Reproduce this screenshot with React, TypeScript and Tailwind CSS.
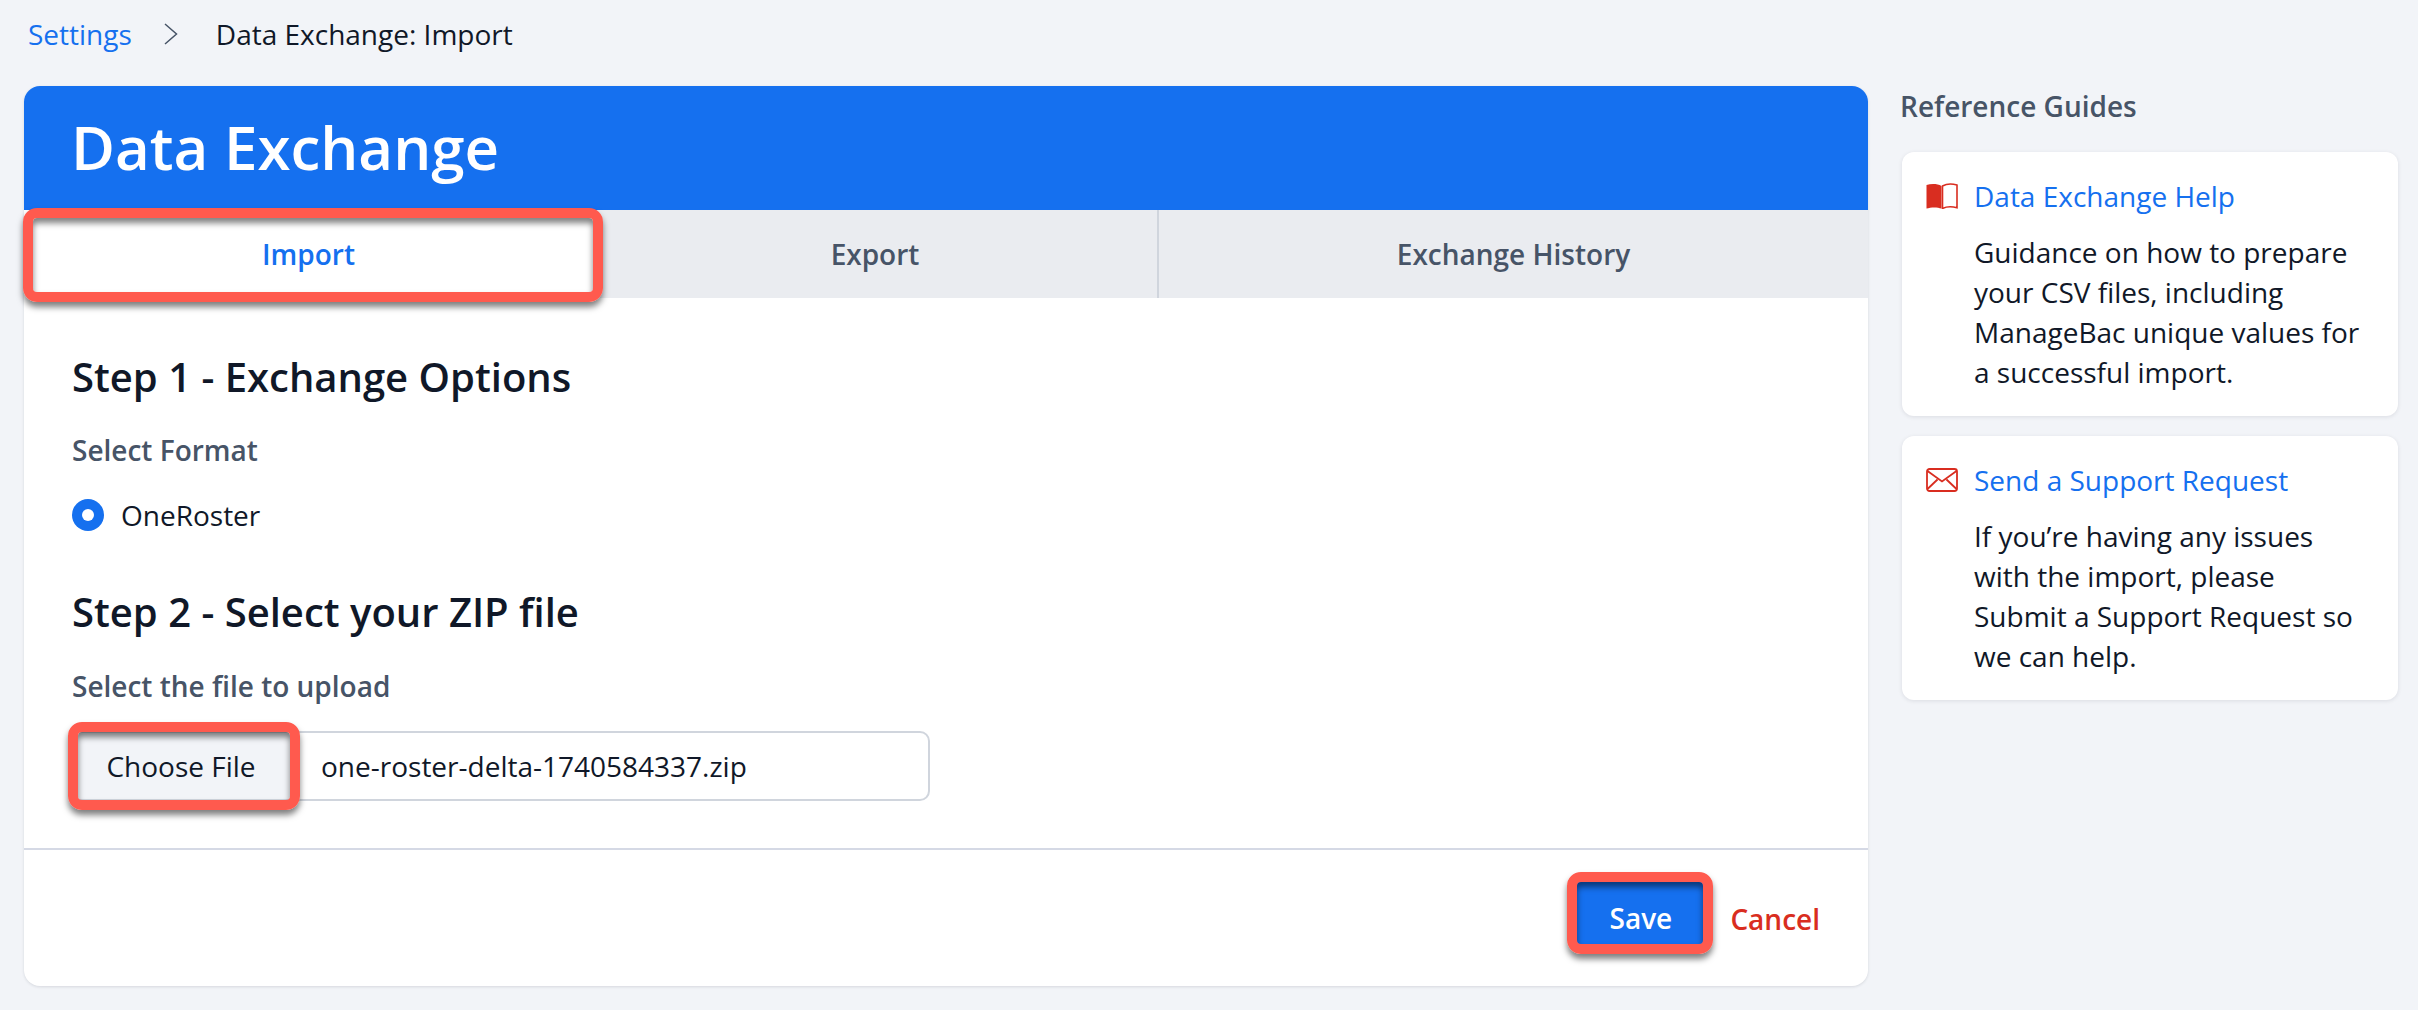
export default function App() {
  return (
    <div className="h-[1010px] overflow-hidden bg-[#f2f4f8] font-['Open_Sans',sans-serif] text-[28px] leading-[40px] text-[#101828]">
      {/* breadcrumb */}
      <div className="flex h-[86px] items-start pl-[28px] pt-[14px]">
        <a className="text-[#1570ef]">Settings</a>
        <svg className="ml-[32px] mr-[38px] mt-[9px]" width="14" height="22" viewBox="0 0 14 22" fill="none" stroke="#475467" strokeWidth="1.5">
          <path d="M1 1l11.500 10L1 21" />
        </svg>
        <span>Data Exchange: Import</span>
      </div>

      <div className="flex items-start pl-[24px]">
        <main className="w-[1844px] rounded-[16px] bg-white shadow-[0_1px_3px_rgba(16,24,40,0.12)]">
          <div className="flex h-[124px] items-center rounded-t-[16px] bg-[#1570ef] pb-[2px] pl-[47px]">
            <h1 className="text-[60px] font-semibold leading-none text-white">Data Exchange</h1>
          </div>

          <div className="flex h-[88px] bg-[#eaecf0] font-semibold text-[#475467]">
            <div className="relative flex w-[569px] items-center justify-center bg-white text-[#1570ef]">
              Import
              <Highlight className="left-[-1px] top-[-2px] h-[94px] w-[580px]" />
            </div>
            <div className="flex w-[566px] items-center justify-center border-r-2 border-[#d0d5dd]">Export</div>
            <div className="flex flex-1 items-center justify-center">Exchange History</div>
          </div>

          <div className="px-[48px]">
            <h2 className="mt-[57px] text-[40px] font-semibold leading-[44px]">Step 1 - Exchange Options</h2>
            <div className="mt-[31px] font-semibold text-[#475467]">Select Format</div>
            <label className="mt-[25px] flex h-[40px] items-center">
              <span className="mr-[17px] flex h-[32px] w-[32px] items-center justify-center rounded-full bg-[#1570ef]">
                <span className="h-[12px] w-[12px] rounded-full bg-white" />
              </span>
              OneRoster
            </label>

            <h2 className="mt-[55px] text-[40px] font-semibold leading-[44px]">Step 2 - Select your ZIP file</h2>
            <div className="mt-[32px] font-semibold text-[#475467]">Select the file to upload</div>

            <div className="mt-[25px] flex h-[70px] w-[858px] items-center rounded-[10px] border-2 border-[#d0d5dd]">
              <div className="relative flex h-full w-[216px] items-center justify-center bg-[#f2f4f8] pr-[2px]">
                Choose File
                <Highlight className="left-[-6px] top-[-11px] h-[88px] w-[232px]" />
              </div>
              <span className="ml-[31px]">one-roster-delta-1740584337.zip</span>
            </div>
          </div>

          <div className="mt-[47px] flex h-[138px] items-start justify-end border-t-2 border-[#d5d9e5] pr-[48px] pt-[47px]">
            <div className="relative flex h-[47px] w-[127px] items-center justify-center rounded-[8px] font-semibold text-white">
              <span className="absolute bottom-0 left-0 right-0 top-[-15px] bg-[#1570ef]" />
              <span className="relative top-[-3px]">Save</span>
              <Highlight className="left-[-10px] top-[-25px] h-[82px] w-[146px]" />
            </div>
            <a className="ml-[26px] font-semibold leading-[44px] text-[#d92d20]">Cancel</a>
          </div>
        </main>

        <aside className="ml-[34px] w-[496px]">
          <h3 className="-ml-[2px] font-semibold text-[#475467]">Reference Guides</h3>
          <GuideCard className="mt-[26px]" icon={<BookIcon />} title="Data Exchange Help">
            Guidance on how to prepare your CSV files, including ManageBac unique values for a successful import.
          </GuideCard>
          <GuideCard className="mt-[20px]" icon={<MailIcon />} title="Send a Support Request">
            If you’re having any issues with the import, please Submit a Support Request so we can help.
          </GuideCard>
        </aside>
      </div>
    </div>
  )
}

function Highlight({ className }: { className: string }) {
  return (
    <span
      className={`pointer-events-none absolute rounded-[14px] border-[10px] border-[#ff5a4e] shadow-[0_5px_6px_rgba(0,0,0,0.5),inset_0_5px_6px_rgba(0,0,0,0.5)] ${className}`}
    />
  )
}

function GuideCard({
  className,
  icon,
  title,
  children,
}: {
  className: string
  icon: React.ReactNode
  title: string
  children: React.ReactNode
}) {
  return (
    <section className={`h-[264px] rounded-[12px] bg-white pl-[24px] pr-[32px] pt-[24px] shadow-[0_1px_4px_rgba(16,24,40,0.1)] ${className}`}>
      <div className="flex h-[40px] items-center">
        <span className="mr-[16px] flex w-[32px] justify-center">{icon}</span>
        <a className="text-[#1570ef]">{title}</a>
      </div>
      <p className="ml-[48px] mt-[16px]">{children}</p>
    </section>
  )
}

function BookIcon() {
  return (
    <svg width="32" height="26" viewBox="0 0 32 26">
      <path d="M15.500 3C11.500.5 5 .5.5 2v23.500c4.500-1.500 11-1.500 15 0z" fill="#d92d20" />
      <path d="M16.500 3c4-2.300 10-2.300 14.500-1v22.800c-4.500-1.300-10.500-1.300-14.500.7z" fill="none" stroke="#d92d20" strokeWidth="1.600" />
    </svg>
  )
}

function MailIcon() {
  return (
    <svg width="32" height="24" viewBox="0 0 32 24" fill="none" stroke="#d92d20" strokeWidth="1.800">
      <rect x="1" y="1" width="30" height="22" rx="2.500" />
      <path d="M1.500 3L16 13.500 30.500 3M1.500 21l10-9.500M30.500 21l-10-9.500" />
    </svg>
  )
}
